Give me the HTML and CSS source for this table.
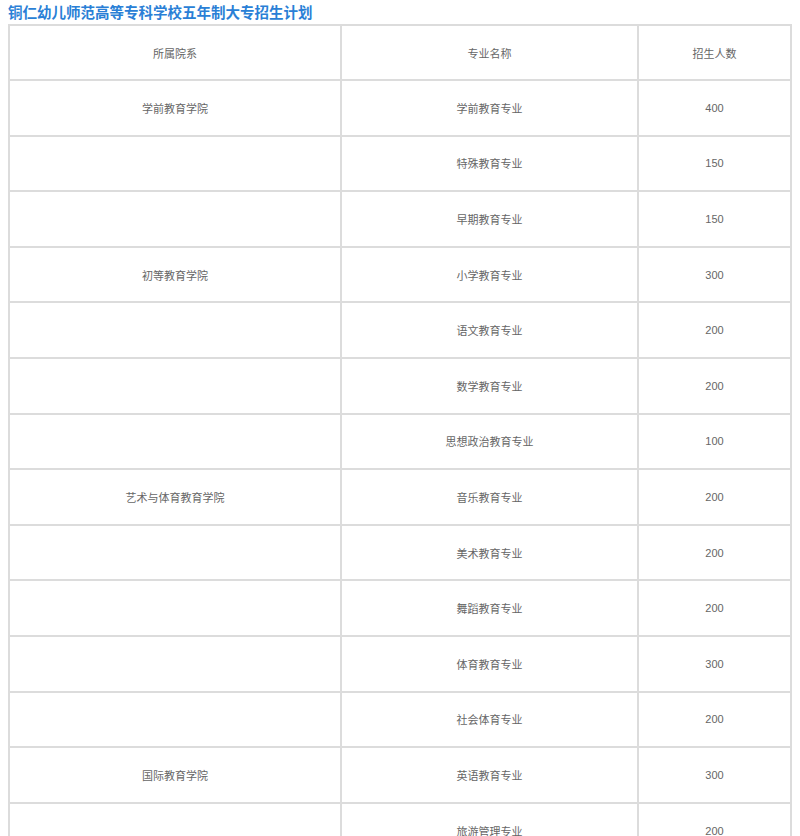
FILE: index.html
```html
<!DOCTYPE html>
<html lang="zh">
<head>
<meta charset="utf-8">
<title>铜仁幼儿师范高等专科学校五年制大专招生计划</title>
<link rel="stylesheet" href="styles.css">
</head>
<body>
<h1 class="title">铜仁幼儿师范高等专科学校五年制大专招生计划</h1>
<table class="plan">
  <colgroup>
    <col class="c1"><col class="c2"><col class="c3">
  </colgroup>
  <tr><td>所属院系</td><td>专业名称</td><td>招生人数</td></tr>
  <tr><td>学前教育学院</td><td>学前教育专业</td><td>400</td></tr>
  <tr><td></td><td>特殊教育专业</td><td>150</td></tr>
  <tr><td></td><td>早期教育专业</td><td>150</td></tr>
  <tr><td>初等教育学院</td><td>小学教育专业</td><td>300</td></tr>
  <tr><td></td><td>语文教育专业</td><td>200</td></tr>
  <tr><td></td><td>数学教育专业</td><td>200</td></tr>
  <tr><td></td><td>思想政治教育专业</td><td>100</td></tr>
  <tr><td>艺术与体育教育学院</td><td>音乐教育专业</td><td>200</td></tr>
  <tr><td></td><td>美术教育专业</td><td>200</td></tr>
  <tr><td></td><td>舞蹈教育专业</td><td>200</td></tr>
  <tr><td></td><td>体育教育专业</td><td>300</td></tr>
  <tr><td></td><td>社会体育专业</td><td>200</td></tr>
  <tr><td>国际教育学院</td><td>英语教育专业</td><td>300</td></tr>
  <tr><td></td><td>旅游管理专业</td><td>200</td></tr>
</table>
</body>
</html>
```
FILE: styles.css
```css
html, body {
  margin: 0;
  background: #fff;
}
body {
  padding: 0 8px;
  font-family: "Liberation Sans", "Noto Sans CJK SC", sans-serif;
}
.title {
  margin: 0;
  padding-top: 3px;
  height: 21px;
  font-size: 14.5px;
  line-height: 18px;
  font-weight: bold;
  color: #2a7fd6;
  font-family: "Noto Sans CJK SC", sans-serif;
}
.plan {
  width: 782px;
  border: 1px solid #dcdcdc;
  border-collapse: separate;
  border-spacing: 0;
  table-layout: fixed;
}
.plan .c1 { width: 332px; }
.plan .c2 { width: 297px; }
.plan .c3 { width: 153px; }
.plan td {
  border: 1px solid #dcdcdc;
  height: 53.6px;
  padding: 0;
  text-align: center;
  vertical-align: middle;
  font-size: 11px;
  color: #666;
  font-family: "Liberation Sans", "Noto Sans CJK SC", sans-serif;
}
.plan tr:first-child td {
  height: 53px;
}
```
